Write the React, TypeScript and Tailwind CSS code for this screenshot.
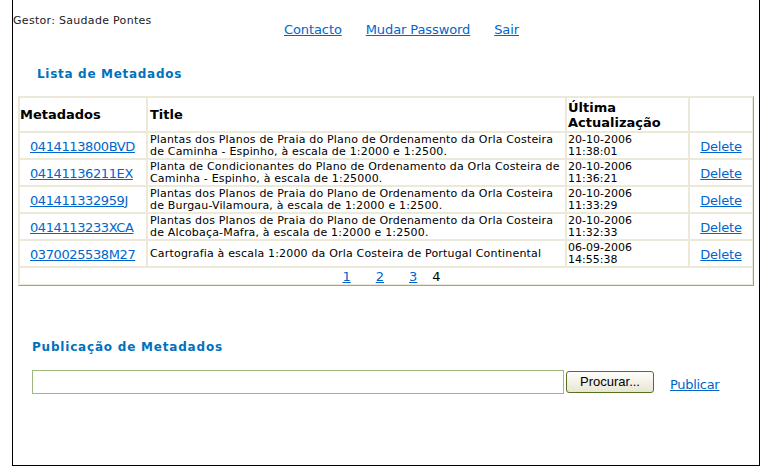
import React from "react";

const rows = [
  {
    id: "0414113800BVD",
    title: ["Plantas dos Planos de Praia do Plano de Ordenamento da Orla Costeira", "de Caminha - Espinho, à escala de 1:2000 e 1:2500."],
    date: "20-10-2006",
    time: "11:38:01",
  },
  {
    id: "04141136211EX",
    title: ["Planta de Condicionantes do Plano de Ordenamento da Orla Costeira de", "Caminha - Espinho, à escala de 1:25000."],
    date: "20-10-2006",
    time: "11:36:21",
  },
  {
    id: "041411332959J",
    title: ["Plantas dos Planos de Praia do Plano de Ordenamento da Orla Costeira", "de Burgau-Vilamoura, à escala de 1:2000 e 1:2500."],
    date: "20-10-2006",
    time: "11:33:29",
  },
  {
    id: "0414113233XCA",
    title: ["Plantas dos Planos de Praia do Plano de Ordenamento da Orla Costeira", "de Alcobaça-Mafra, à escala de 1:2000 e 1:2500."],
    date: "20-10-2006",
    time: "11:32:33",
  },
  {
    id: "0370025538M27",
    title: ["Cartografia à escala 1:2000 da Orla Costeira de Portugal Continental"],
    date: "06-09-2006",
    time: "14:55:38",
  },
];

const font = "font-['DejaVu_Sans',Verdana,sans-serif]";
const link = "text-[#0066cc] underline";

export default function App() {
  return (
    <div className={`${font} bg-white w-[767px] h-[473px]`}>
      <div className="ml-[12px] w-[748px] h-[466px] border-l border-r border-b border-black">
        {/* top bar */}
        <div className="flex items-start">
          <div className="w-[271px] shrink-0 pt-[14px] text-[11px] leading-[13px] tracking-[0.3px] text-[#222]">
            Gestor: Saudade Pontes
          </div>
          <div className="pt-[22px] flex gap-[24px] text-[13px] leading-[16px] tracking-[-0.1px]">
            <a className={link}>Contacto</a>
            <a className={link}>Mudar Password</a>
            <a className={link}>Sair</a>
          </div>
        </div>

        {/* Lista */}
        <div className="mt-[28px] ml-[24px] text-[12px] leading-[16px] font-bold tracking-[0.7px] text-[#0071bc]">
          Lista de Metadados
        </div>

        <div className="mt-[14px] ml-[5px] w-[736px] border-t border-l border-t-[#ece9d8] border-l-[#ece9d8] border-r border-b border-r-[#a0a0a0] border-b-[#a0a0a0]">
          <table className="w-[734px] table-fixed border-separate border-spacing-0 text-black">
            <colgroup>
              <col className="w-[128px]" />
              <col className="w-[419px]" />
              <col className="w-[123px]" />
              <col className="w-[64px]" />
            </colgroup>
            <thead>
              <tr className="h-[35px]">
                <th className="border border-[#ece9d8] text-left align-middle pl-0 text-[13px] leading-[15px] font-bold">
                  Metadados
                </th>
                <th className="border border-[#ece9d8] text-left align-middle pl-[2px] text-[13px] leading-[15px] font-bold">
                  Title
                </th>
                <th className="border border-[#ece9d8] text-left align-middle pl-[1px] text-[13px] leading-[15px] font-bold">
                  Última
                  <br />
                  Actualização
                </th>
                <th className="border border-[#ece9d8]"></th>
              </tr>
            </thead>
            <tbody>
              {rows.map((r) => (
                <tr key={r.id} className="h-[27px]">
                  <td className="border border-[#ece9d8] text-left pl-[10px] align-middle text-[13px] leading-[16px] tracking-[-0.4px] pt-[2px]">
                    <a className={link}>{r.id}</a>
                  </td>
                  <td className="border border-[#ece9d8] align-middle pl-[2px] text-[11px] leading-[12px] tracking-[0.18px] whitespace-nowrap">
                    {r.title.map((t, i) => (
                      <div key={i}>{t}</div>
                    ))}
                  </td>
                  <td className="border border-[#ece9d8] align-middle pl-[1px] text-[11px] leading-[12px]">
                    <div>{r.date}</div>
                    <div>{r.time}</div>
                  </td>
                  <td className="border border-[#ece9d8] text-center align-middle text-[13px] leading-[16px] tracking-[-0.2px] pt-[2px]">
                    <a className={link}>Delete</a>
                  </td>
                </tr>
              ))}
              <tr className="h-[18px]">
                <td colSpan={4} className="border border-[#ece9d8] align-middle">
                  <div className="flex justify-center pl-[11px] text-[13px] leading-[15px]">
                    <a className={link}>1</a>
                    <a className={`${link} ml-[25px]`}>2</a>
                    <a className={`${link} ml-[25px]`}>3</a>
                    <span className="ml-[15px] text-black">4</span>
                  </div>
                </td>
              </tr>
            </tbody>
          </table>
        </div>

        {/* Publicação */}
        <div className="mt-[53px] ml-[19px] text-[12px] leading-[16px] font-bold tracking-[0.8px] text-[#0071bc]">
          Publicação de Metadados
        </div>

        <div className="mt-[15px] ml-[19px] flex items-start">
          <input
            type="text"
            className="w-[532px] h-[24px] border border-[#a0b77e] bg-white outline-none"
          />
          <button className="ml-[2px] mt-[1px] w-[88px] h-[22px] rounded-[3px] border border-[#55731f] bg-gradient-to-b from-[#fefefd] to-[#e9e5d2] font-['Liberation_Sans',Arial,sans-serif] text-[13px] leading-[14px] text-black">
            Procurar...
          </button>
          <a className={`${link} ml-[16px] mt-[7px] text-[13px] leading-[16px] tracking-[-0.3px]`}>Publicar</a>
        </div>
      </div>
    </div>
  );
}
